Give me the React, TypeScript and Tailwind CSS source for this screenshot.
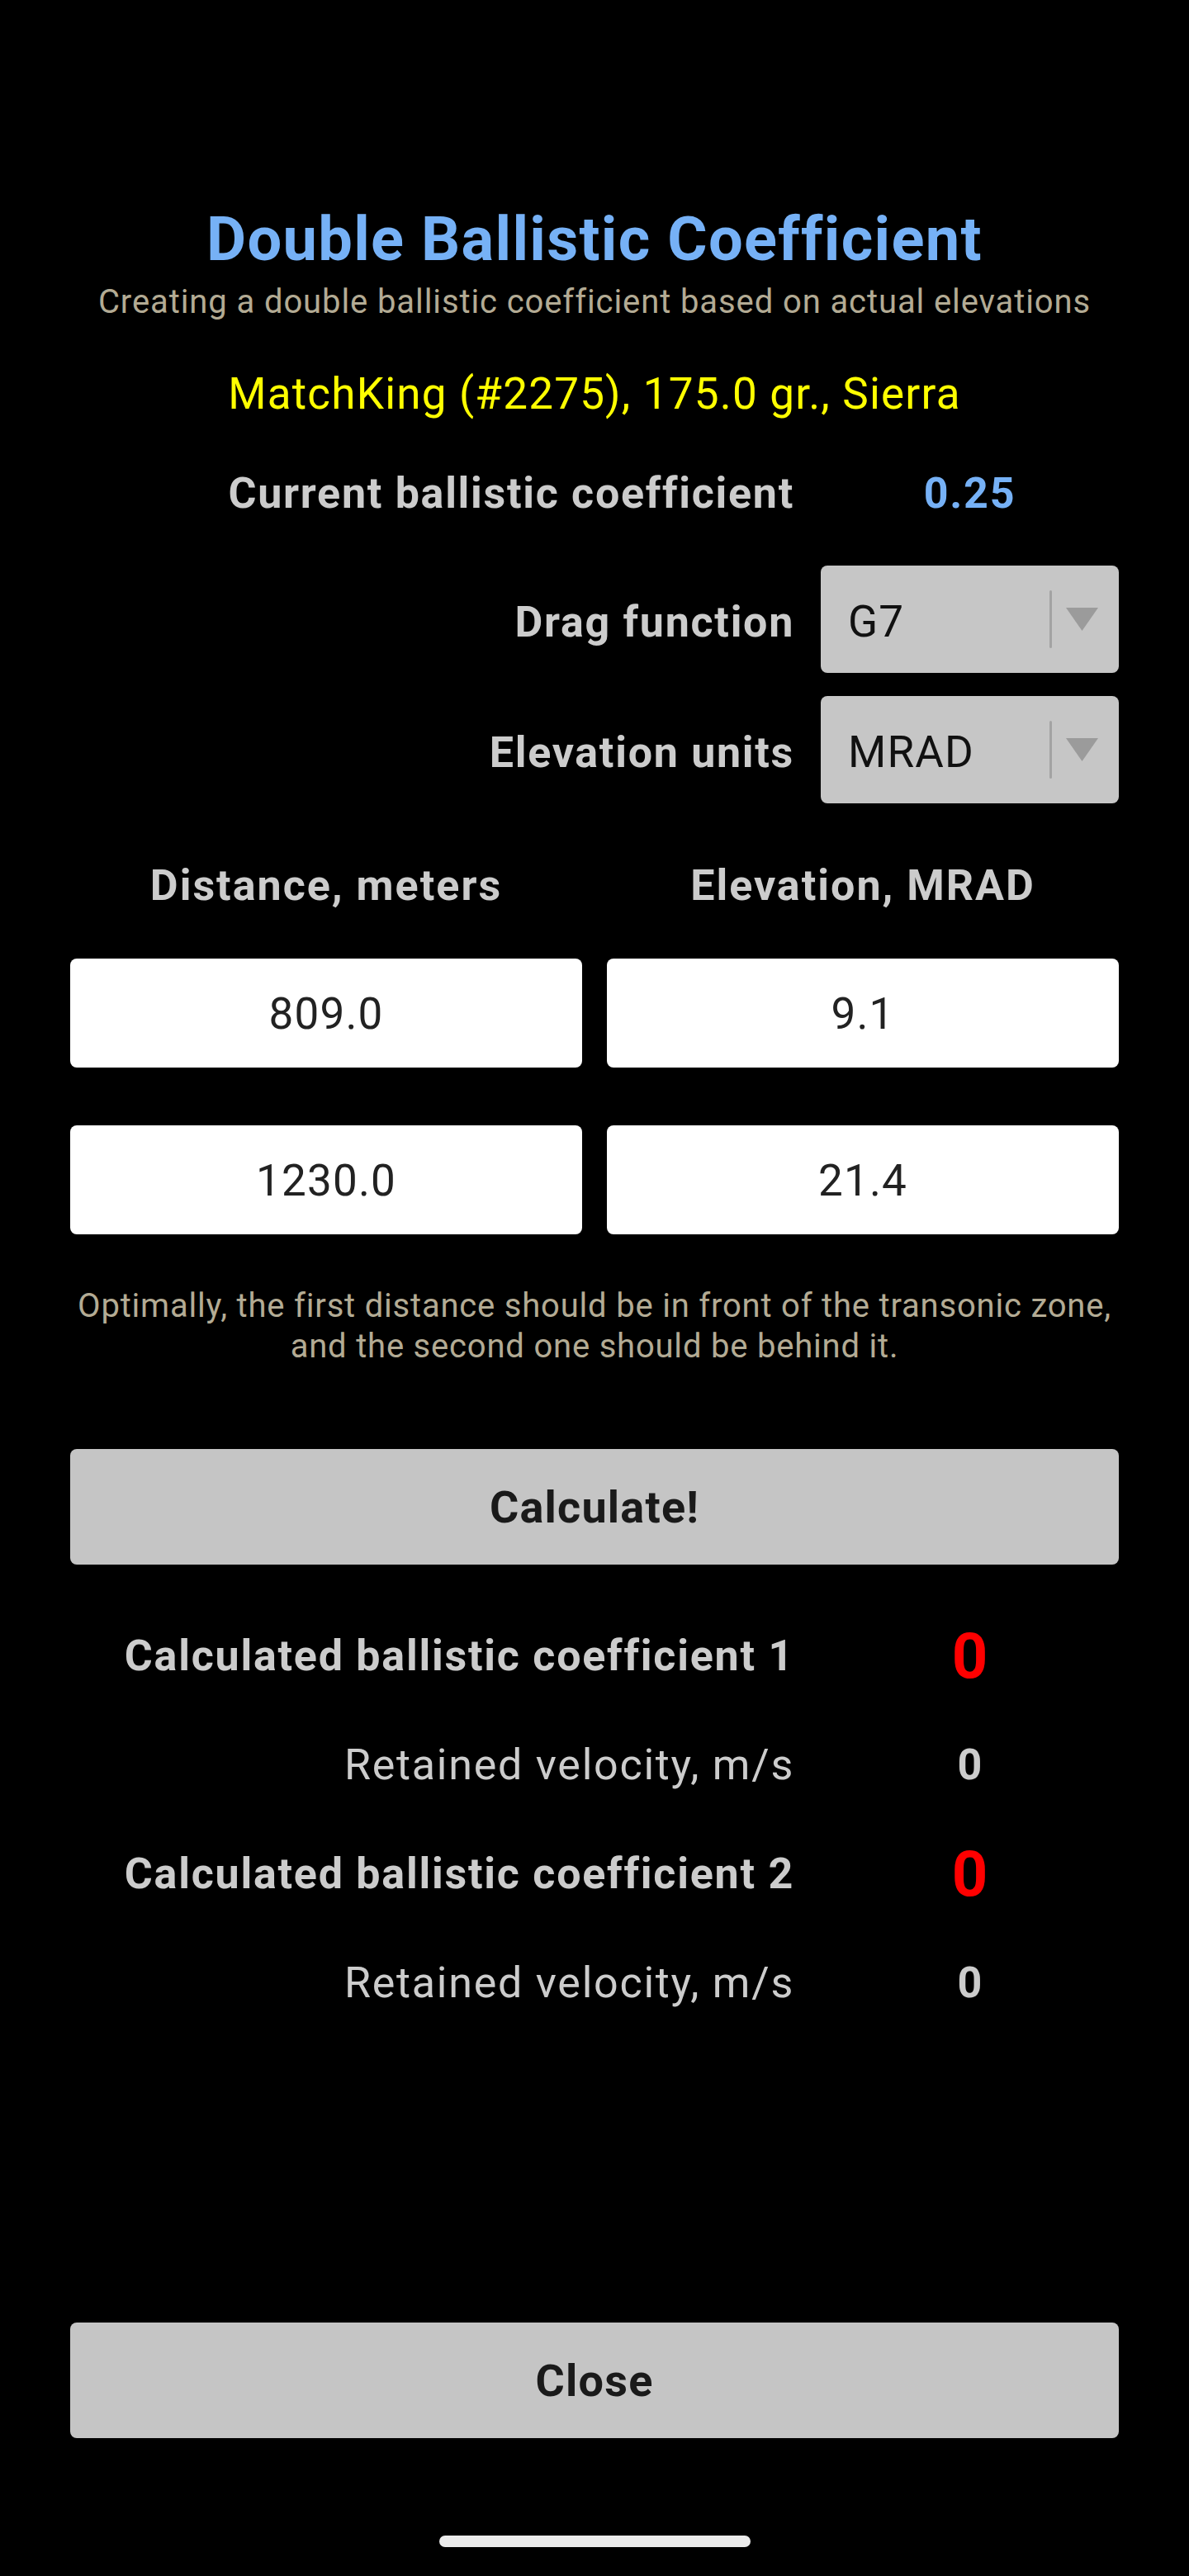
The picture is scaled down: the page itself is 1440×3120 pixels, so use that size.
import React from "react";

function Dropdown({ value }: { value: string }) {
  return (
    <div className="h-[130px] w-full rounded-[8px] bg-[#c6c6c6] flex items-center pl-[33px] pr-[25px]">
      <span className="flex-1 text-[53px] leading-none tracking-[1.2px] text-[#111111] pt-[6px]">{value}</span>
      <div className="w-[3px] h-[70px] bg-[#a3a3a3] rounded-full" />
      <svg className="ml-[17px] w-[39px] h-[28px]" viewBox="0 0 39 28">
        <polygon points="0,0 39,0 19.5,28" fill="#9b9b9b" />
      </svg>
    </div>
  );
}

function NumberBox({ value }: { value: string }) {
  return (
    <div className="h-[132px] rounded-[8px] bg-white flex items-center justify-center text-[53px] tracking-[1.2px] text-[#222222] pt-[4px]">
      {value}
    </div>
  );
}

function ResultRow({ label, value, big }: { label: string; value: string; big?: boolean }) {
  return (
    <div className="grid grid-cols-[1fr_361px] gap-x-[32px] h-[132px] items-center">
      <span
        className={`text-right text-[52px] text-[#cccccc] tracking-[1.75px] ${big ? "font-bold" : "font-normal"}`}
      >
        {label}
      </span>
      <span
        className={`text-center font-bold ${big ? "text-[76px] text-[#ff0000]" : "text-[52px] text-[#cccccc]"}`}
      >
        {value}
      </span>
    </div>
  );
}

export default function App() {
  return (
    <div
      className="min-h-[3120px] w-[1440px] bg-black flex flex-col px-[85px] pt-[250px]"
      style={{ fontFamily: "Roboto, 'Noto Sans', sans-serif" }}
    >
      <h1 className="h-[80px] leading-[80px] text-center text-[74px] font-bold tracking-[1.3px] text-[#76b1f6]">
        Double Ballistic Coefficient
      </h1>
      <p className="mt-[11px] h-[50px] leading-[50px] text-center text-[40px] tracking-[0.9px] text-[#b3ab94] -mx-[60px]">
        Creating a double ballistic coefficient based on actual elevations
      </p>
      <p className="mt-[54px] h-[64px] leading-[64px] text-center text-[53px] tracking-[1.2px] text-[#ffff00]">
        MatchKing (#2275), 175.0 gr., Sierra
      </p>

      <div className="mt-[50px] grid grid-cols-[1fr_361px] gap-x-[32px] h-[64px] items-center">
        <span className="text-right text-[52px] font-bold tracking-[1.7px] text-[#cccccc]">
          Current ballistic coefficient
        </span>
        <span className="text-center text-[52px] font-bold tracking-[1.7px] text-[#76b1f6]">0.25</span>
      </div>

      <div className="mt-[62px] grid grid-cols-[1fr_361px] gap-x-[32px] items-center">
        <span className="text-right text-[52px] font-bold tracking-[1.7px] text-[#cccccc] pt-[8px]">Drag function</span>
        <Dropdown value="G7" />
      </div>
      <div className="mt-[28px] grid grid-cols-[1fr_361px] gap-x-[32px] items-center">
        <span className="text-right text-[52px] font-bold tracking-[1.7px] text-[#cccccc] pt-[8px]">Elevation units</span>
        <Dropdown value="MRAD" />
      </div>

      <div className="mt-[61px] grid grid-cols-2 gap-x-[30px] h-[64px] items-center">
        <span className="text-center text-[52px] font-bold tracking-[2px] text-[#cccccc]">Distance, meters</span>
        <span className="text-center text-[52px] font-bold tracking-[2px] text-[#cccccc]">Elevation, MRAD</span>
      </div>

      <div className="mt-[63px] grid grid-cols-2 gap-x-[30px]">
        <NumberBox value="809.0" />
        <NumberBox value="9.1" />
      </div>
      <div className="mt-[70px] grid grid-cols-2 gap-x-[30px]">
        <NumberBox value="1230.0" />
        <NumberBox value="21.4" />
      </div>

      <p className="mt-[62px] text-center text-[40px] leading-[49px] tracking-[0.8px] text-[#b3ab94] -mx-[40px]">
        Optimally, the first distance should be in front of the transonic zone,
        <br />
        and the second one should be behind it.
      </p>

      <button
        type="button"
        className="mt-[100px] h-[140px] w-full rounded-[8px] bg-[#c5c5c5] text-[54px] font-bold tracking-[1.2px] text-[#1a1a1a]"
      >
        Calculate!
      </button>

      <div className="mt-[45px] flex flex-col">
        <ResultRow label="Calculated ballistic coefficient 1" value="0" big />
        <ResultRow label="Retained velocity, m/s" value="0" />
        <ResultRow label="Calculated ballistic coefficient 2" value="0" big />
        <ResultRow label="Retained velocity, m/s" value="0" />
      </div>

      <button
        type="button"
        className="mt-[345px] h-[140px] w-full rounded-[8px] bg-[#c5c5c5] text-[54px] font-bold tracking-[1.2px] text-[#1a1a1a]"
      >
        Close
      </button>

      {/* home indicator */}
      <div className="mt-[118px] mx-auto h-[14px] w-[377px] rounded-full bg-[#ebebeb]" />
    </div>
  );
}
